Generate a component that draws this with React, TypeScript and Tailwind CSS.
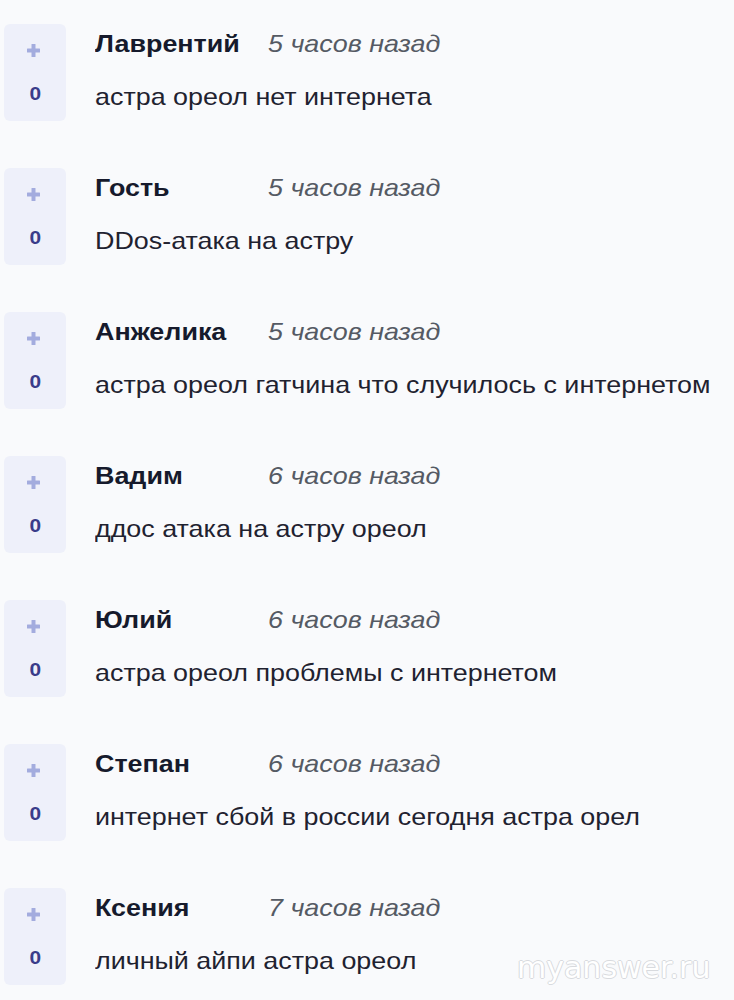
import React from "react";

const items = [
  { name: "Лаврентий", time: "5 часов назад", text: "астра ореол нет интернета" },
  { name: "Гость", time: "5 часов назад", text: "DDos-атака на астру" },
  { name: "Анжелика", time: "5 часов назад", text: "астра ореол гатчина что случилось с интернетом" },
  { name: "Вадим", time: "6 часов назад", text: "ддос атака на астру ореол" },
  { name: "Юлий", time: "6 часов назад", text: "астра ореол проблемы с интернетом" },
  { name: "Степан", time: "6 часов назад", text: "интернет сбой в россии сегодня астра орел" },
  { name: "Ксения", time: "7 часов назад", text: "личный айпи астра ореол" },
];

function Plus() {
  return (
    <svg width="13" height="13" viewBox="0 0 13 13" className="block">
      <rect x="4.5" y="0" width="4" height="13" rx="0.5" fill="#a3acde" />
      <rect x="0" y="4.5" width="13" height="4" rx="0.5" fill="#a3acde" />
    </svg>
  );
}

export default function App() {
  return (
    <div
      className="relative w-[734px] h-[1000px] bg-[#f9fafc] overflow-hidden"
      style={{ fontFamily: '"Liberation Sans", Arial, sans-serif' }}
    >
      <div className="flex flex-col pt-[24px]">
        {items.map((it, i) => (
          <div key={i} className="flex h-[144px]">
            <div className="ml-[4px] w-[62px] h-[97px] rounded-[6px] bg-[#eef0fa] flex flex-col items-center">
              <div className="mt-[20px] mr-[4px]">
                <Plus />
              </div>
              <div className="mt-[27px] text-[19px] leading-[20px] font-bold text-[#3a3c8a] scale-x-[1.1]">0</div>
            </div>
            <div className="ml-[29px] pt-[5px] flex flex-col origin-left scale-x-[1.12]">
              <div className="flex items-baseline text-[24px] leading-[30px]">
                <span className="w-[154.5px] font-bold text-[#161a2c]">{it.name}</span>
                <span className="italic text-[#555a64]">{it.time}</span>
              </div>
              <div className="mt-[23px] text-[24px] leading-[30px] text-[#1f2230] whitespace-nowrap">
                {it.text}
              </div>
            </div>
          </div>
        ))}
      </div>
      <div
        className="absolute left-[517px] top-[950px] text-[30px] leading-[36px] text-white"
        style={{
          fontFamily: '"DejaVu Sans", sans-serif',
          textShadow:
            "1px 0 0 #d8dade, -1px 0 0 #d8dade, 0 1px 0 #d8dade, 0 -1px 0 #d8dade",
        }}
      >
        myanswer.ru
      </div>
    </div>
  );
}
